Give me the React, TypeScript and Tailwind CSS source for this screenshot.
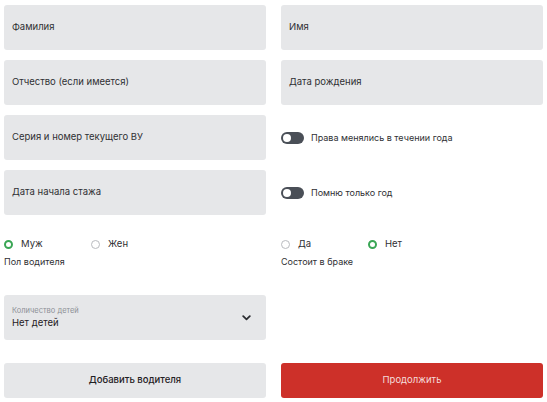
import { useState } from "react";

// Поле ввода с серым фоном
function Field({ label }: { label: string }) {
    return (
        <div className="h-[45px] bg-[#e6e7e9] rounded-[3px] flex items-center px-[8px] text-[9.5px] text-[#2f3033]">
            {label}
        </div>
    );
}

function Toggle({ label }: { label: string }) {
    return (
        <div className="h-[45px] flex items-center gap-[7px]">
            <div className="w-[23px] h-[12px] rounded-full bg-[#4a4f57] flex items-center px-[2px]">
                <div className="w-[8px] h-[8px] rounded-full bg-white" />
            </div>
            <span className="text-[9px] text-[#2f3033]">{label}</span>
        </div>
    );
}

function Radio({ label, checked }: { label: string; checked?: boolean }) {
    return (
        <div className="flex items-center gap-[8px] w-[87px]">
            {checked ? (
                <div className="w-[9px] h-[9px] rounded-full border-[2.5px] border-[#3aa655] bg-white" />
            ) : (
                <div className="w-[9px] h-[9px] rounded-full border border-[#b9bbbf] bg-white" />
            )}
            <span className="text-[9.5px] text-[#2f3033]">{label}</span>
        </div>
    );
}

export default function App() {
    const [gender] = useState("m");
    const [married] = useState(false);

    return (
        <div className="w-[547px] h-[402px] bg-white px-[4px] pt-[5px] font-['Inter',sans-serif] overflow-hidden">
            <div className="grid grid-cols-2 gap-x-[15px] gap-y-[10px]">
                <Field label="Фамилия" />
                <Field label="Имя" />
                <Field label="Отчество (если имеется)" />
                <Field label="Дата рождения" />
                <Field label="Серия и номер текущего ВУ" />
                <Toggle label="Права менялись в течении года" />
                <Field label="Дата начала стажа" />
                <Toggle label="Помню только год" />
            </div>

            <div className="grid grid-cols-2 gap-x-[15px] mt-[22px]">
                <div>
                    <div className="flex h-[14px] items-center">
                        <Radio label="Муж" checked={gender === "m"} />
                        <Radio label="Жен" checked={gender === "f"} />
                    </div>
                    <div className="mt-[4px] text-[9px] text-[#2f3033] leading-[14px]">Пол водителя</div>
                </div>
                <div>
                    <div className="flex h-[14px] items-center">
                        <Radio label="Да" checked={married} />
                        <Radio label="Нет" checked={!married} />
                    </div>
                    <div className="mt-[4px] text-[9px] text-[#2f3033] leading-[14px]">Состоит в браке</div>
                </div>
            </div>

            <div className="grid grid-cols-2 gap-x-[15px] mt-[26px]">
                <div className="h-[45px] bg-[#e6e7e9] rounded-[3px] flex items-center justify-between pl-[8px] pr-[15px]">
                    <div className="flex flex-col">
                        <span className="text-[7.5px] text-[#8d9096] leading-[11px]">Количество детей</span>
                        <span className="text-[9.5px] text-[#1f2023] leading-[14px]">Нет детей</span>
                    </div>
                    <svg width="9" height="6" viewBox="0 0 9 6" fill="none">
                        <path d="M1.2 1.2 L4.5 4.3 L7.8 1.2" stroke="#2b2d31" strokeWidth="1.8" strokeLinecap="round" strokeLinejoin="round" />
                    </svg>
                </div>
                <div />
            </div>

            <div className="grid grid-cols-2 gap-x-[15px] mt-[23px]">
                <button className="h-[35px] bg-[#e6e7e9] rounded-[3px] text-[9.5px] font-medium text-[#1f2023]">
                    Добавить водителя
                </button>
                <button className="h-[35px] bg-[#cd3029] rounded-[3px] text-[9.5px] text-[#f4dcdb]">
                    Продолжить
                </button>
            </div>
        </div>
    );
}
